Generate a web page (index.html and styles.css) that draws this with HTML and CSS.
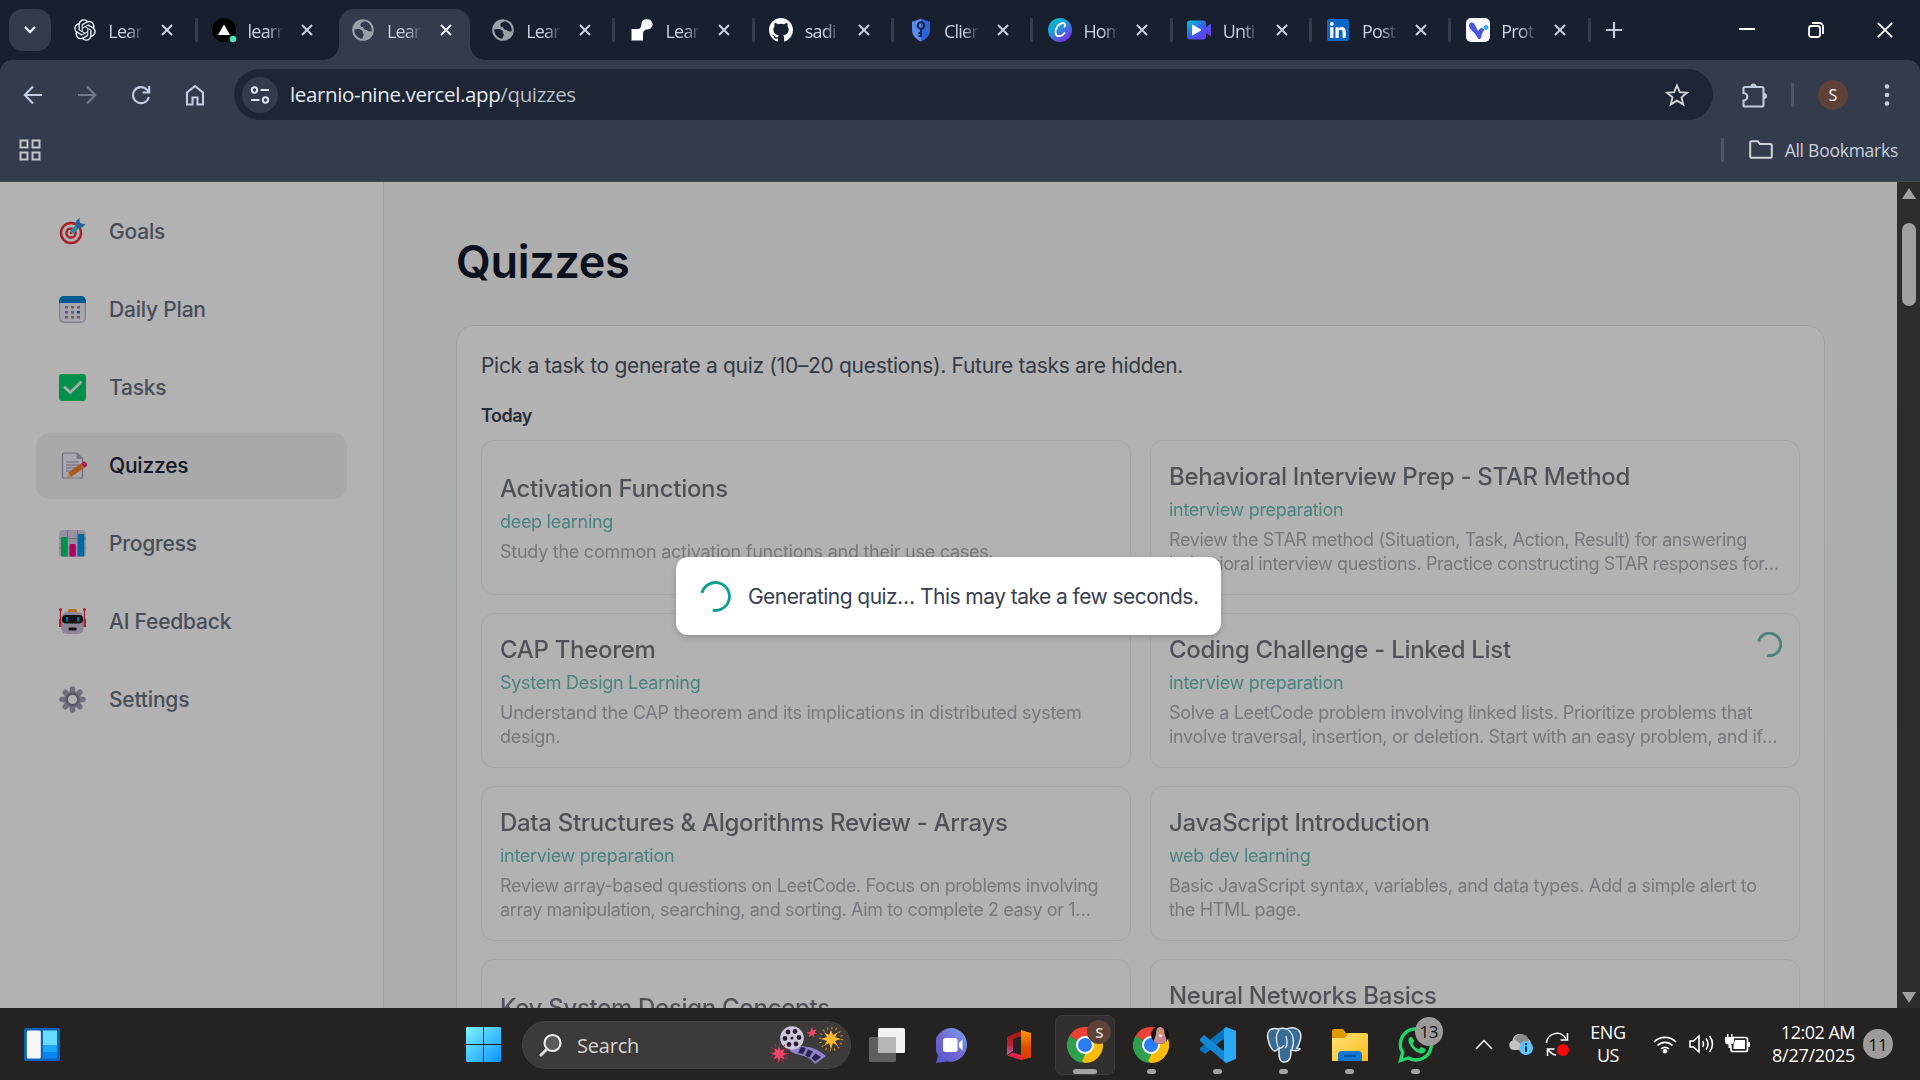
FILE: index.html
```html
<!DOCTYPE html>
<html lang="en">
<head>
<meta charset="utf-8">
<title>Learnio - Quizzes</title>
<link rel="stylesheet" href="styles.css">
</head>
<body>
<svg class="defs" aria-hidden="true">
  <defs>
    <linearGradient id="canva" x1="0" y1="0" x2=".7" y2="1"><stop offset="0" stop-color="#00c4cc"/><stop offset=".45" stop-color="#1b9fd8"/><stop offset="1" stop-color="#7d2ae8"/></linearGradient>
    <linearGradient id="film" x1="0" y1="0" x2="1" y2="1"><stop offset="0" stop-color="#00c8c8"/><stop offset=".5" stop-color="#3a5cf0"/><stop offset="1" stop-color="#8a2af0"/></linearGradient>
    <linearGradient id="win" gradientUnits="userSpaceOnUse" x1="0" y1="0" x2="35" y2="35"><stop offset="0" stop-color="#7df5ff"/><stop offset="1" stop-color="#0a93ff"/></linearGradient>
    <linearGradient id="teams" x1="1" y1="0" x2="0" y2="1"><stop offset="0" stop-color="#7ba6f0"/><stop offset=".5" stop-color="#7268d0"/><stop offset="1" stop-color="#5552c8"/></linearGradient>
    <linearGradient id="office" x1="0" y1="0" x2="0" y2="1"><stop offset="0" stop-color="#ff9a00"/><stop offset=".6" stop-color="#e04a00"/><stop offset="1" stop-color="#d93a00"/></linearGradient>
    <linearGradient id="officel" x1="0" y1="0" x2="0" y2="1"><stop offset="0" stop-color="#a81208"/><stop offset=".6" stop-color="#b8283c"/><stop offset="1" stop-color="#c05ab8"/></linearGradient>
    <linearGradient id="folder" x1="0" y1="0" x2="1" y2="1"><stop offset="0" stop-color="#ffe27a"/><stop offset="1" stop-color="#fbbc1a"/></linearGradient>
    <symbol id="close" viewBox="0 0 14 14"><path d="M2 2l10 10M12 2L2 12" stroke="currentColor" stroke-width="2" fill="none"/></symbol>
    <symbol id="globe" viewBox="0 0 22 22"><circle cx="11" cy="11" r="10.800" fill="#9aa0a8"/><path d="M13 2.300C11 2.800 8.500 3.800 8.300 6c0 1.800 1.500 2 2.700 2 .5 1.800 1.800 3 3.500 3 1 1.300 3 1.800 5.200 1.200C20.300 8 17.500 3.300 13 2.300zM2.300 10.500c2.200-.8 6-.7 7.700.8 1.200 1 1 2.200.5 3 1.500.2 1.700 1.500.8 2.800-.7 1-.6 1.800-.5 2.600C6 19.800 2 15.500 2.300 10.500z" fill="var(--hole)"/></symbol>
    <symbol id="chrome" viewBox="0 0 36 36"><path d="M18 18L2.400 9A18 18 0 0 1 33.600 9z" fill="#ea4335"/><path d="M18 18L33.600 9A18 18 0 0 1 18 36z" fill="#fbbc05"/><path d="M18 18v18A18 18 0 0 1 2.400 9z" fill="#2fa04e"/><path d="M18 9h15.600L35 13H20z" fill="#fbbc05"/><path d="M25.800 22.500L18 36l-3-2 5-10z" fill="#fbbc05"/><path d="M10.200 22.500L2.400 9l8 5z" fill="#2fa04e"/><circle cx="18" cy="18" r="9" fill="#fff"/><circle cx="18" cy="18" r="7" fill="#2a7cf0"/></symbol>
  </defs>
</svg>

<header class="browser">
  <div class="tabstrip">
    <button class="tab-search"><svg width="14" height="10" viewBox="0 0 14 10"><path d="M2 2l5 5 5-5" fill="none" stroke="#e6ebf5" stroke-width="2.400"/></svg></button>
    <div class="tabs">
      <div class="tab"><svg class="fav" viewBox="0 0 24 24"><path fill="#e8ecf2" transform="translate(1.200 1.200) scale(.9)" d="M22.282 9.821a5.985 5.985 0 0 0-.516-4.910 6.046 6.046 0 0 0-6.510-2.900A6.065 6.065 0 0 0 4.981 4.182a5.985 5.985 0 0 0-3.998 2.900 6.046 6.046 0 0 0 .743 7.097 5.980 5.980 0 0 0 .510 4.911 6.051 6.051 0 0 0 6.515 2.900A5.985 5.985 0 0 0 13.260 24a6.056 6.056 0 0 0 5.772-4.206 5.990 5.990 0 0 0 3.997-2.900 6.056 6.056 0 0 0-.747-7.073zM13.260 22.430a4.476 4.476 0 0 1-2.876-1.040l.141-.081 4.779-2.758a.795.795 0 0 0 .392-.681v-6.737l2.020 1.168a.071.071 0 0 1 .038.052v5.583a4.504 4.504 0 0 1-4.494 4.494zM3.600 18.304a4.470 4.470 0 0 1-.535-3.014l.142.085 4.783 2.759a.771.771 0 0 0 .780 0l5.843-3.369v2.332a.080.080 0 0 1-.033.062L9.740 19.950a4.500 4.500 0 0 1-6.140-1.646zM2.340 7.896a4.485 4.485 0 0 1 2.366-1.973V11.600a.766.766 0 0 0 .388.676l5.815 3.355-2.020 1.168a.076.076 0 0 1-.071 0l-4.830-2.786A4.504 4.504 0 0 1 2.340 7.872zm16.597 3.855l-5.833-3.387L15.119 7.200a.076.076 0 0 1 .071 0l4.830 2.791a4.494 4.494 0 0 1-.676 8.105v-5.678a.790.790 0 0 0-.407-.667zm2.010-3.023l-.141-.085-4.774-2.782a.776.776 0 0 0-.785 0L9.409 9.230V6.897a.066.066 0 0 1 .028-.061l4.830-2.787a4.500 4.500 0 0 1 6.680 4.660zm-12.640 4.135l-2.020-1.164a.080.080 0 0 1-.038-.057V6.075a4.500 4.500 0 0 1 7.375-3.453l-.142.080L8.704 5.460a.795.795 0 0 0-.393.681zm1.097-2.365l2.602-1.500 2.607 1.500v2.999l-2.597 1.500-2.607-1.500z"/></svg><span class="tab-title">Lear</span><svg class="x"><use href="#close"/></svg></div>
      <div class="tab nosep"><svg class="fav" viewBox="0 0 24 24"><circle cx="12" cy="12" r="12" fill="#000"/><path d="M12 6.500l6 10.500H6z" fill="#fff"/><circle cx="21" cy="21" r="3.200" fill="#50e3c2"/></svg><span class="tab-title">learn</span><svg class="x"><use href="#close"/></svg></div>
      <div class="tab active nosep"><svg class="fav globe" viewBox="0 0 22 22"><use href="#globe"/></svg><span class="tab-title">Lear</span><svg class="x"><use href="#close"/></svg></div>
      <div class="tab"><svg class="fav globe" viewBox="0 0 22 22"><use href="#globe"/></svg><span class="tab-title">Lear</span><svg class="x"><use href="#close"/></svg></div>
      <div class="tab"><svg class="fav" viewBox="0 0 24 24"><path d="M1.500 11H7c4 0 4-2 4.500-5.500S14 1 17.500 1.300a5 5 0 0 1 0 10.200C13.500 11.500 13 14 13 17v5.500H1.500z" fill="#fff"/></svg><span class="tab-title">Lear</span><svg class="x"><use href="#close"/></svg></div>
      <div class="tab"><svg class="fav" viewBox="0 0 16 16"><path fill="#fff" d="M8 0C3.580 0 0 3.580 0 8c0 3.540 2.290 6.530 5.470 7.590.4.070.55-.17.55-.38 0-.19-.010-.82-.010-1.490-2.010.37-2.530-.49-2.690-.94-.090-.23-.48-.94-.82-1.130-.28-.15-.68-.52-.010-.53.63-.010 1.080.58 1.230.82.72 1.210 1.870.87 2.330.66.070-.52.28-.87.51-1.070-1.780-.2-3.640-.89-3.640-3.950 0-.87.31-1.590.82-2.150-.080-.2-.36-1.020.080-2.120 0 0 .67-.21 2.200.82a7.600 7.600 0 0 1 4 0c1.530-1.040 2.200-.82 2.200-.82.44 1.100.16 1.920.080 2.120.51.56.82 1.270.82 2.150 0 3.070-1.870 3.750-3.650 3.950.29.25.54.73.54 1.480 0 1.070-.010 1.930-.010 2.200 0 .21.15.46.55.38A8 8 0 0 0 16 8c0-4.420-3.580-8-8-8z"/></svg><span class="tab-title">sadi</span><svg class="x"><use href="#close"/></svg></div>
      <div class="tab"><svg class="fav" viewBox="0 0 24 24"><path d="M12 .8l9 3V12c0 6-4.500 9.500-9 11.500z" fill="#2f63d6"/><path d="M12 .8L3 3.800V12c0 6 4.500 9.500 9 11.500z" fill="#5a8be6"/><circle cx="12" cy="7.500" r="3.300" fill="none" stroke="#10264f" stroke-width="2"/><path d="M12 11v8M12 15h-2.500M12 18h-2.500" stroke="#10264f" stroke-width="2"/></svg><span class="tab-title">Clien</span><svg class="x"><use href="#close"/></svg></div>
      <div class="tab"><svg class="fav" viewBox="0 0 24 24"><circle cx="12" cy="12" r="12" fill="url(#canva)"/><path d="M16.500 8.800c1-1.500.5-3.800-1.500-3.800-4 0-8 5.500-7.500 9.800.5 4.500 6 4.500 9 .2" fill="none" stroke="#fff" stroke-width="1.800" stroke-linecap="round"/></svg><span class="tab-title">Hom</span><svg class="x"><use href="#close"/></svg></div>
      <div class="tab"><svg class="fav" viewBox="0 0 24 24"><path d="M3 2.500h13a3 3 0 0 1 3 3V9l5-3.500v13L19 15v3.500a3 3 0 0 1-3 3H3a3 3 0 0 1-3-3v-13a3 3 0 0 1 3-3z" fill="url(#film)"/><path d="M5.500 7l8.500 5-8.500 5z" fill="#fff" stroke="#fff" stroke-linejoin="round"/></svg><span class="tab-title">Unti</span><svg class="x"><use href="#close"/></svg></div>
      <div class="tab"><svg class="fav" viewBox="0 0 24 24"><rect x="1" y="1" width="22" height="22" rx="2" fill="#0a66c2"/><path d="M4.200 9.300h3.200V20H4.200zM9.500 9.300h3v1.500c1.300-2.600 7.300-2.600 7.300 2.700V20h-3.200v-5.800c0-3.200-3.900-3-3.900 0V20H9.500z" fill="#fff"/><circle cx="5.800" cy="6" r="1.900" fill="#fff"/></svg><span class="tab-title">Post</span><svg class="x"><use href="#close"/></svg></div>
      <div class="tab"><svg class="fav" viewBox="0 0 24 24"><rect width="24" height="24" rx="5" fill="#f7f8ff"/><path d="M3 7.500C3 4 7.500 3.500 9 7l3 6 3.500-3.500 2.800 2.200c-2 2-2.300 5-3.300 8-.6 1.800-3 1.800-3.600 0C9.500 14 3 12 3 7.500z" fill="#4a55dc"/><circle cx="20" cy="9.500" r="2.400" fill="#35aef0"/></svg><span class="tab-title">Prot</span><svg class="x"><use href="#close"/></svg></div>
    </div>
    <svg class="new-tab" width="16" height="16" viewBox="0 0 16 16"><path d="M8 0v16M0 8h16" stroke="#c3cde0" stroke-width="2.200"/></svg>
    <div class="window-controls">
      <svg width="16" height="16" viewBox="0 0 16 16"><path d="M0 7h16" stroke="#fff" stroke-width="2"/></svg>
      <svg width="16" height="16" viewBox="0 0 16 16"><rect x="1" y="4" width="11" height="11" rx="2.500" fill="none" stroke="#fff" stroke-width="1.800"/><path d="M4 1h7.500A3.500 3.500 0 0 1 15 4.500V12" fill="none" stroke="#fff" stroke-width="1.800"/></svg>
      <svg width="16" height="16" viewBox="0 0 16 16"><path d="M.8.8l14.400 14.400M15.200.8L.8 15.200" stroke="#fff" stroke-width="1.700"/></svg>
    </div>
  </div>
  <div class="toolbar">
    <div class="nav-buttons">
      <svg width="20" height="20" viewBox="0 0 20 20"><path d="M10 1.500L1.800 10l8.200 8.500M2 10h17" fill="none" stroke="#c3cde6" stroke-width="2.100"/></svg>
      <svg width="20" height="20" viewBox="0 0 20 20"><path d="M10 1.500l8.200 8.500-8.200 8.500M18 10H1" fill="none" stroke="#737b8b" stroke-width="2.100"/></svg>
      <svg width="20" height="20" viewBox="0 0 20 20"><path d="M17.800 12a8 8 0 1 1-1.800-7.200l2 2.200M18.200 1v6.500h-6.500" fill="none" stroke="#c3cde6" stroke-width="2.100"/></svg>
      <svg width="20" height="22" viewBox="0 0 20 22"><path d="M2 8.500L10 2l8 6.500V20.500h-5.500v-7h-5v7H2z" fill="none" stroke="#c3cde6" stroke-width="2.100"/></svg>
    </div>
    <div class="omnibox">
      <span class="site-info"><svg width="20" height="18" viewBox="0 0 20 18"><g fill="none" stroke="#dfe5f0" stroke-width="2"><circle cx="4.500" cy="4" r="2.700"/><path d="M10.500 4H19M1 14h8.500"/><circle cx="15.500" cy="14" r="2.700"/></g></svg></span>
      <span class="url">learnio-nine.vercel.app<span class="path">/quizzes</span></span>
      <svg class="star" width="24" height="24" viewBox="0 0 24 24"><path d="M12 2.500l2.800 6.600 7.200.6-5.500 4.700 1.700 7-6.200-3.800-6.200 3.800 1.700-7L2 9.700l7.200-.6z" fill="none" stroke="#d0d2d6" stroke-width="1.900"/></svg>
    </div>
    <div class="extras">
      <svg width="26" height="26" viewBox="0 0 26 26"><path d="M4 5h17a1.500 1.500 0 0 1 1.500 1.500V23A1.500 1.500 0 0 1 21 24.500H4A1.500 1.500 0 0 1 2.500 23v-4.500c5 0 5-7.500 0-7.500V6.500A1.500 1.500 0 0 1 4 5z" fill="none" stroke="#bfc9e2" stroke-width="2.100"/><path d="M9.500 4.500a3 3 0 0 1 6 0zM23 11a3 3 0 0 1 0 6z" fill="#bfc9e2"/></svg>
      <span class="divider"></span>
      <span class="avatar">S</span>
      <svg width="6" height="24" viewBox="0 0 6 24"><g fill="#c3cde6"><circle cx="3" cy="3.500" r="2.300"/><circle cx="3" cy="12" r="2.300"/><circle cx="3" cy="20.500" r="2.300"/></g></svg>
    </div>
  </div>
  <div class="bookmarks">
    <svg width="22" height="22" viewBox="0 0 22 22"><g fill="none" stroke="#c4c6cb" stroke-width="2"><rect x="1.500" y="1.500" width="7" height="7"/><rect x="13.500" y="1.500" width="7" height="7"/><rect x="1.500" y="13.500" width="7" height="7"/><rect x="13.500" y="13.500" width="7" height="7"/></g></svg>
    <div class="all-bookmarks">
      <span class="divider"></span>
      <svg width="24" height="19" viewBox="0 0 24 19"><path d="M1.200 2.500a1.300 1.300 0 0 1 1.300-1.300h6.300L11 4h10.500a1.300 1.300 0 0 1 1.300 1.300v11.200a1.300 1.300 0 0 1-1.300 1.300h-19a1.300 1.300 0 0 1-1.300-1.300z" fill="none" stroke="#d2d4d8" stroke-width="2"/></svg>
      <span>All Bookmarks</span>
    </div>
  </div>
</header>

<div class="viewport">
  <div class="page">
    <nav class="sidebar">
      <a class="nav-item"><svg viewBox="0 0 27 27"><circle cx="12" cy="15" r="10" fill="#fff" stroke="#f0303c" stroke-width="2.500"/><circle cx="12" cy="15" r="4.600" fill="#fff" stroke="#f0303c" stroke-width="2.500"/><circle cx="12" cy="15" r="1.300" fill="#f0303c"/><path d="M12.500 14.500L19 8" stroke="#3cc4e6" stroke-width="4.500"/><path d="M17 3l3.500-3L21 5l5.500 1.500-3.500 3-5 .5-1.500-3z" fill="#3a8fe6"/></svg>Goals</a>
      <a class="nav-item"><svg viewBox="0 0 27 27"><rect x=".7" y=".7" width="25.600" height="25.600" rx="4.500" fill="#f2eef8" stroke="#b9b1c6" stroke-width="1.200"/><path d="M0 7V5a5 5 0 0 1 5-5h17a5 5 0 0 1 5 5v2z" fill="#0083ce"/><g fill="#8b8496"><path d="M6 10h3v2.500H6zM12 10h3v2.500h-3zM18 10h3v2.500h-3zM6 15h3v2.500H6zM12 15h3v2.500h-3zM6 20h3v2.500H6zM12 20h3v2.500h-3zM18 20h3v2.500h-3z"/></g><path d="M18 15h3v2.500h-3z" fill="#0083ce"/></svg>Daily Plan</a>
      <a class="nav-item"><svg viewBox="0 0 27 27"><rect width="27" height="27" rx="3" fill="#00d26a"/><path d="M6 13.500l5.200 5L21.500 8.500" fill="none" stroke="#f4f4f4" stroke-width="3" stroke-linecap="round" stroke-linejoin="round"/></svg>Tasks</a>
      <a class="nav-item current"><svg viewBox="0 0 27 27"><path d="M5 1h13l5.500 5.500V26H3.500V2.500A1.500 1.500 0 0 1 5 1z" fill="#f3eef8" stroke="#a49ab3" stroke-width="1.200"/><path d="M17.500 1v6h6z" fill="#b4acbc"/><path d="M7 10h13M7 13h13M7 16h9M7 19h5" stroke="#998ea4" stroke-width="1"/><path d="M9 21L21.500 11.500l3.500 4.500-13 9-3.500.5z" fill="#f5822a"/><path d="M9 20.500l3.500 4.500-4 .8z" fill="#fdd48a"/><path d="M22 12l2-2.200c2-1 5 2 4 4L25.500 16z" fill="#f8327a"/></svg>Quizzes</a>
      <a class="nav-item"><svg viewBox="0 0 27 27"><rect width="27" height="27" rx="4" fill="#d9cfe6"/><path d="M0 8.500h27M0 18h27M8.500 0v27M18.500 0v27" stroke="#a89eb6" stroke-width="1"/><rect x="2" y="7" width="6.300" height="19.500" rx="1" fill="#00d26a"/><rect x="10.500" y="14" width="6.300" height="12.500" rx="1" fill="#f7078c"/><rect x="19" y="4" width="6.300" height="22.500" rx="1" fill="#0098e8"/></svg>Progress</a>
      <a class="nav-item"><svg viewBox="0 0 27 27"><path d="M1.500 1v18M25.500 1v18" stroke="#f0303c" stroke-width="1.300"/><circle cx="1.500" cy="1.500" r="1.500" fill="#f0303c"/><circle cx="25.500" cy="1.500" r="1.500" fill="#f0303c"/><path d="M0 11h3v8H0zM24 11h3v8h-3z" fill="#f0303c"/><rect x="9" y="1" width="9" height="5" rx="1.500" fill="#f9a825"/><rect x="2.200" y="4" width="22.600" height="22" rx="6" fill="#cabfd8"/><rect x="3" y="7" width="21" height="8.500" rx="4" fill="#1c1c1c"/><path d="M7 9h2.300v4.500H7zM18 9h2.300v4.500H18z" fill="#00a6ed"/><rect x="9.500" y="19.500" width="8" height="3" rx="1" fill="#1c1c1c"/></svg>AI Feedback</a>
      <a class="nav-item"><svg viewBox="0 0 27 27"><g stroke="#a59db3" stroke-width="5.500" stroke-linecap="round"><path d="M13.500 3v21M3 13.500h21M6.200 6.200l14.600 14.600M20.800 6.200L6.200 20.800"/></g><circle cx="13.500" cy="13.500" r="8.500" fill="#a59db3"/><circle cx="13.500" cy="13.500" r="5.800" fill="#fff" stroke="#857b92" stroke-width="2.400"/></svg>Settings</a>
    </nav>
    <main class="main">
      <h1>Quizzes</h1>
      <section class="panel">
        <p class="hint">Pick a task to generate a quiz (10–20 questions). Future tasks are hidden.</p>
        <h2>Today</h2>
        <div class="cards">
          <article class="card"><h3>Activation Functions</h3><p class="topic">deep learning</p><p class="desc">Study the common activation functions and their use cases.</p></article>
          <article class="card"><h3>Behavioral Interview Prep - STAR Method</h3><p class="topic">interview preparation</p><p class="desc tight">Review the STAR method (Situation, Task, Action, Result) for answering<br>behavioral interview questions. Practice constructing STAR responses for…</p></article>
          <article class="card"><h3>CAP Theorem</h3><p class="topic">System Design Learning</p><p class="desc">Understand the CAP theorem and its implications in distributed system<br>design.</p></article>
          <article class="card"><h3>Coding Challenge - Linked List</h3><p class="topic">interview preparation</p><p class="desc snug">Solve a LeetCode problem involving linked lists. Prioritize problems that<br>involve traversal, insertion, or deletion. Start with an easy problem, and if…</p><svg class="card-spinner" viewBox="0 0 30 30"><path d="M1.900 11.600A13.500 13.500 0 1 1 12.300 28.200" fill="none" stroke="#0d9488" stroke-width="3.400"/></svg></article>
          <article class="card"><h3>Data Structures &amp; Algorithms Review - Arrays</h3><p class="topic">interview preparation</p><p class="desc tight">Review array-based questions on LeetCode. Focus on problems involving<br>array manipulation, searching, and sorting. Aim to complete 2 easy or 1…</p></article>
          <article class="card"><h3>JavaScript Introduction</h3><p class="topic">web dev learning</p><p class="desc snug">Basic JavaScript syntax, variables, and data types. Add a simple alert to<br>the HTML page.</p></article>
          <article class="card"><h3>Key System Design Concepts</h3><p class="topic">System Design Learning</p><p class="desc">Learn the key concepts.</p></article>
          <article class="card"><h3>Neural Networks Basics</h3><p class="topic">deep learning</p><p class="desc">Understand the basics of neural networks.<br>Layers and weights.</p></article>
        </div>
      </section>
    </main>
    <div class="overlay">
      <div class="dialog">
        <svg width="31" height="31" viewBox="0 0 30 30"><path d="M1.900 11.600A13.500 13.500 0 1 1 12.300 28.200" fill="none" stroke="#0d9f90" stroke-width="2.800"/></svg>
        <span>Generating quiz… This may take a few seconds.</span>
      </div>
    </div>
  </div>
  <div class="scrollbar">
    <svg width="14" height="11" viewBox="0 0 14 11"><path d="M7 0l7 11H0z" fill="#a0a0a0"/></svg>
    <span class="thumb"></span>
    <svg class="down" width="14" height="11" viewBox="0 0 14 11"><path d="M7 11l7-11H0z" fill="#a0a0a0"/></svg>
  </div>
</div>

<footer class="taskbar">
  <svg class="widgets" width="36" height="33" viewBox="0 0 36 33"><rect width="36" height="33" rx="2" fill="#0d62b8"/><rect x="2.800" y="2.500" width="14" height="28" rx="1.500" fill="#f6f6f6"/><rect x="19" y="2.500" width="14" height="15" fill="#66dcff"/><rect x="19" y="17.500" width="14" height="6.500" fill="#1ba6fb"/><rect x="19" y="24" width="14" height="6.500" fill="#0a84f0"/></svg>
  <div class="task-center">
    <svg width="35" height="35" viewBox="0 0 35 35"><path d="M1 0h16v17H0V1zM18 0h16l1 1v16H18zM0 18h17v17H1l-1-1zM18 18h17v16l-1 1H18z" fill="url(#win)"/></svg>
    <div class="search">
      <svg width="24" height="24" viewBox="0 0 24 24"><circle cx="13.500" cy="10" r="8" fill="#5a5a59" stroke="#eee" stroke-width="2.200"/><path d="M8 16l-6 6" stroke="#ddd" stroke-width="3" stroke-linecap="round"/></svg>
      <span>Search</span>
      <svg class="film-art" width="76" height="38" viewBox="0 0 76 38"><path d="M25 18c8 5 16-2 33 12l-11 8c-8-11-17-7-25-13z" fill="#8f7fce"/><path d="M33 21l5 1-3 6-5-1zM40 23.500l5 2-4 6-4-2zM47.500 27.500l5.500 3.500-6 4.500-3.500-3.500z" fill="#2c2348"/><circle cx="24" cy="12" r="11.800" fill="#d0c8da"/><g fill="#2a2035"><circle cx="20" cy="6" r="2.400"/><circle cx="27" cy="5.500" r="2.400"/><circle cx="31" cy="11.500" r="2.400"/><circle cx="28" cy="18" r="2.400"/><circle cx="21" cy="18.500" r="2.400"/><circle cx="17" cy="12.500" r="2.400"/><circle cx="24" cy="12" r="1.500"/></g><circle cx="63" cy="13" r="11" fill="none" stroke="#c98a24" stroke-width="2.500" stroke-dasharray="1.200 3.120"/><path d="M63 4l2 5 5-3-3 5 6 2-6 2 3 5-5-3-2 6-2-6-5 3 3-5-6-2 6-2-3-5 5 3z" fill="#ffb830"/><path d="M44 1l1.200 3.500L49 3l-2.500 3 3 1.500-3.500.5.500 4-2.500-3-3 2.500.5-3.500-3-1.500 3.500-.5z" fill="#f04468"/><circle cx="11" cy="27" r="8.500" fill="none" stroke="#b02440" stroke-width="3" stroke-dasharray="1 3.450"/><path d="M11 20l1.500 4.500 4.500-2-2 4 4.500 1.500-4.500 1.500 1.500 4-4-2-1.500 4.500-1.500-4.500-4 2 2-4L3 27.500 7.500 26l-2-4 4 2z" fill="#f04468"/></svg>
    </div>
    <div class="apps">
      <span class="app"><svg width="36" height="34" viewBox="0 0 36 34"><rect y="9" width="27" height="25" rx="1.500" fill="#5e5e5e"/><rect x="9" width="27" height="25" rx="1.500" fill="#f2f2f2"/><path d="M9 9h18v16H9z" fill="#b5b5b5"/></svg></span>
      <span class="app"><svg width="34" height="35" viewBox="0 0 34 35"><path d="M17 0a17 17 0 1 1-6 33.500L0 35l2-8A17 17 0 0 1 17 0z" fill="url(#teams)"/><rect x="7" y="10" width="14.500" height="14" rx="2.500" fill="#fff"/><path d="M23 15l3.500-3.500v11L23 19z" fill="#fff"/></svg></span>
      <span class="app"><svg width="26" height="31" viewBox="0 0 26 31"><path d="M1 7l14-6v5L7 9v12l-6 4z" fill="url(#officel)"/><path d="M15 0l10 3v24.500L15 30z" fill="url(#office)"/><path d="M1 25.500l6-3 8 2.500v5z" fill="#e4204e"/></svg></span>
      <span class="app focused"><svg width="36" height="36"><use href="#chrome"/></svg><i class="profile">S</i><i class="run wide"></i></span>
      <span class="app"><svg width="36" height="36"><use href="#chrome"/></svg><svg class="portrait" width="18" height="18" viewBox="0 0 18 18"><clipPath id="pc"><circle cx="9" cy="9" r="9"/></clipPath><g clip-path="url(#pc)"><rect width="18" height="18" fill="#101018"/><path d="M9 1c3 0 4.500 2.500 4.500 6l3 11H2L5 8c0-4 1-7 4-7z" fill="#c88a90"/><ellipse cx="9.500" cy="6.500" rx="2.800" ry="3.800" fill="#c8936e"/><path d="M7.500 8.500h4l-1 2.500h-2z" fill="#f0e6e2"/></g></svg><i class="run"></i></span>
      <span class="app"><svg width="36" height="36" viewBox="0 0 36 36"><path d="M26 0v10L5 27l-5-4v-2z" fill="#0874bd"/><path d="M0 12l4-4 22 18v10L0 14z" fill="#1487d4"/><path d="M26 0l10 4v28l-10 4-2-2V2z" fill="#2aa9f4"/></svg><i class="run"></i></span>
      <span class="app"><svg width="36" height="36" viewBox="0 0 36 36"><path d="M12 2C5 0 0 4 2 12c1 6 4 12 7 12 2 0 3-2 4-3 0 5-1 14 5 14 7 0 7-7 7-12 4 1 8 1 9-1l-3-1c3-5 5-12 3-16-3-5-9-5-13-3-3-1-6-1-9 0z" fill="#396c94" stroke="#e4ebf0" stroke-width="1.500"/><path d="M13 3c-4 5-3 11-1 17M22 3c5 3 7 11 4 19M18 18c-2 4-5 3-6 4M19 21c3-2 2-9 1-12" fill="none" stroke="#e4ebf0" stroke-width="1.300"/></svg><i class="run"></i></span>
      <span class="app"><svg width="36" height="33" viewBox="0 0 36 33"><path d="M0 2a2 2 0 0 1 2-2h9l3 4h8v8H0z" fill="#dc9a00"/><path d="M0 9h13l4-5h17a2 2 0 0 1 2 2v26H0z" fill="url(#folder)"/><path d="M6 32v-6a4 4 0 0 1 4-4h16a4 4 0 0 1 4 4v6z" fill="#0f78d4"/><path d="M12 27h12" stroke="#0a4f9e" stroke-width="2"/></svg><i class="run"></i></span>
      <span class="app"><svg width="36" height="36" viewBox="0 0 36 36"><path d="M2.500 33.500l2.200-8A15.500 15.500 0 1 1 10.500 31z" fill="none" stroke="#25d366" stroke-width="3.400"/><path d="M12.500 10c-3 1.500-2.500 5 .5 9.500 4 5.500 9 8 12.500 6.500 2-1 2.500-3 2-4l-4-2c-1-.3-2 2.500-3 2.200-2.500-1-5-3.500-5.800-5.500 0-1 2-2 1.500-3l-2-3.500z" fill="#25d366"/></svg><i class="count">13</i><i class="run"></i></span>
    </div>
  </div>
  <div class="tray">
    <svg class="chev" width="18" height="11" viewBox="0 0 18 11"><path d="M1 10l8-8.500 8 8.500" fill="none" stroke="#fff" stroke-width="1.500"/></svg>
    <svg class="cloud" width="25" height="22" viewBox="0 0 25 22"><path d="M5 17a5 5 0 0 1-.5-9.500C6 0 14-1 17 5c4 0 6 3 6 6s-2 6-5 6z" fill="#c4c4c4"/><path d="M6 6c3-8 15-6 15 3l-8 2z" fill="#8c8c8c"/><circle cx="18" cy="15" r="7" fill="#5cc3f7"/><path d="M18 13.500V19M18 10v2" stroke="#07344e" stroke-width="2"/></svg>
    <svg class="sync" width="25" height="25" viewBox="0 0 25 25"><path d="M1.500 11A10.500 10.500 0 0 1 21 6.500M22.500 1v7h-7M2.500 24v-7h7M3 17.500c2 3 4 5 8 5.500" fill="none" stroke="#fff" stroke-width="1.500"/><circle cx="18" cy="18" r="6" fill="#fb0505"/></svg>
    <span class="lang">ENG<br>US</span>
    <svg class="wifi" width="24" height="20" viewBox="0 0 24 20"><g fill="none" stroke="#fff" stroke-width="1.700"><path d="M1 8a15.500 15.500 0 0 1 22 0M4.500 11.500a10.500 10.500 0 0 1 15 0M8 15a5.600 5.600 0 0 1 8 0"/></g><circle cx="12" cy="17.300" r="2.200" fill="#fff"/></svg>
    <svg class="vol" width="25" height="20" viewBox="0 0 25 20"><path d="M1 7h3.500L10 2v16l-5.500-5H1zM13.500 7q2 3 0 6M17 4.500q4 5.500 0 11M20.500 2q6 8 0 16" fill="none" stroke="#fff" stroke-width="1.600"/></svg>
    <svg class="bat" width="25" height="20" viewBox="0 0 25 20"><path d="M7 3.500h13.500a2 2 0 0 1 2 2v10a2 2 0 0 1-2 2H8a2 2 0 0 1-2-2v-4" fill="none" stroke="#fff" stroke-width="1.700"/><path d="M10 6h10v9H8.500v-4zM23 8h2v5h-2zM0 3h9v4a3.500 3.500 0 0 1-3 3.500V14H3.500v-3.500A3.500 3.500 0 0 1 0 7zM2 0h1.500v3H2zM6 0h1.500v3H6z" fill="#fff"/></svg>
    <span class="clock"><span class="time">12:02 AM</span><br>8/27/2025</span>
    <span class="notif">11</span>
  </div>
</footer>
</body>
</html>
```
FILE: styles.css
```css
* { box-sizing: border-box; }
body {
  margin: 0;
  width: 1920px;
  height: 1080px;
  overflow: hidden;
  display: flex;
  flex-direction: column;
  background: #182030;
  font-family: Inter, sans-serif;
}
h1, h2, h3, p { margin: 0; }
svg { display: block; flex: none; }
i { font-style: normal; }
.defs { position: absolute; width: 0; height: 0; }

/* browser window */
.browser {
  height: 182px;
  flex: none;
  font-family: "Open Sans", "Noto Sans", sans-serif;
  color: #c9d0de;
}
.tabstrip {
  height: 60px;
  display: flex;
  align-items: center;
  padding-left: 9px;
}
.tab-search {
  width: 42px;
  height: 42px;
  margin-right: 5.300px;
  padding: 0;
  border: 0;
  border-radius: 14px;
  background: #333b4c;
  display: grid;
  place-items: center;
}
.tabs { display: flex; height: 60px; flex: none; }
.tab {
  --hole: #182030;
  position: relative;
  width: 139.300px;
  height: 60px;
  padding: 0 0 0 16.500px;
  display: flex;
  align-items: center;
}
.fav { width: 24px; height: 24px; overflow: visible; }
.fav.globe { width: 22px; height: 22px; margin: 0 1px; }
.tab-title {
  width: 35px;
  margin-left: 11.500px;
  overflow: hidden;
  white-space: nowrap;
  font-size: 18px;
  line-height: 24px;
  letter-spacing: -0.8px;
  padding-top: 2px;
  -webkit-mask-image: linear-gradient(90deg, #000 55%, transparent 102%);
  mask-image: linear-gradient(90deg, #000 55%, transparent 102%);
}
.x { width: 14px; height: 14px; margin-left: 17px; color: #c9d0de; }
.tab:not(.nosep)::after {
  content: "";
  position: absolute;
  right: -2px;
  top: 18px;
  width: 3px;
  height: 24px;
  border-radius: 1px;
  background: #333b4c;
}
.tab.active { --hole: #333b4c; }
.tab.active .x { color: #eef1f7; }
.tab.active > * { z-index: 1; }
.tab.active::before {
  content: "";
  position: absolute;
  left: 4px;
  right: 4px;
  top: 9px;
  bottom: 0;
  border-radius: 15px 15px 0 0;
  background: #333b4c;
}
.tab.active::after {
  content: "";
  position: absolute;
  left: -11px;
  right: -11px;
  bottom: 0;
  height: 15px;
  width: auto;
  background:
    radial-gradient(circle at 0 0, transparent 14.500px, #333b4c 15px) left / 15px 15px no-repeat,
    radial-gradient(circle at 100% 0, transparent 14.500px, #333b4c 15px) right / 15px 15px no-repeat;
}
.new-tab { margin-left: 17px; }
.window-controls { display: flex; gap: 53px; margin-left: auto; padding-right: 27px; }

.toolbar {
  height: 70px;
  display: flex;
  align-items: center;
  background: #333b4c;
  border-radius: 12px 12px 0 0;
}
.nav-buttons { width: 234px; display: flex; align-items: center; gap: 34px; padding-left: 23px; }
.omnibox {
  width: 1479px;
  height: 51px;
  margin-bottom: 1px;
  padding: 0 24px 0 8px;
  border-radius: 26px;
  background: #1e2636;
  display: flex;
  align-items: center;
}
.site-info {
  width: 36px;
  height: 36px;
  border-radius: 50%;
  background: #333b4c;
  display: grid;
  place-items: center;
}
.url { margin-left: 12px; padding-bottom: 1px; font-size: 20.500px; letter-spacing: -0.37px; color: #e6eaf2; }
.url .path { color: #b9bfca; }
.star { margin-left: auto; }
.extras { display: flex; align-items: center; padding-left: 28px; }
.divider { width: 3px; height: 24px; border-radius: 1px; background: #4d5566; }
.extras .divider { margin-left: 24px; }
.avatar {
  width: 30px;
  height: 30px;
  margin: 0 36px 0 24px;
  border-radius: 50%;
  background: #5f4137;
  color: #fff;
  font-size: 16px;
  display: grid;
  place-items: center;
}
.bookmarks {
  height: 52px;
  padding: 0 22px 12px 19px;
  display: flex;
  align-items: center;
  justify-content: space-between;
  background: #333b4c;
  border-bottom: 1px solid #47484c;
}
.all-bookmarks { display: flex; align-items: center; font-size: 17.500px; letter-spacing: -0.25px; }
.all-bookmarks svg { margin: 0 12px 0 25px; }

/* app page */
.viewport { height: 826px; flex: none; display: flex; overflow: hidden; }
.page { position: relative; width: 1897px; display: flex; overflow: hidden; background: #f9f9f9; }
.sidebar {
  width: 384px;
  padding: 17px 36px 0;
  display: flex;
  flex-direction: column;
  gap: 12.500px;
  background: #fff;
  border-right: 1px solid #e5e7eb;
}
.nav-item {
  height: 65.500px;
  flex: none;
  padding-left: 23px;
  border-radius: 14px;
  display: flex;
  align-items: center;
  gap: 23px;
  color: #66707f;
  font-size: 21px;
  font-weight: 500;
  letter-spacing: -0.2px;
}
.nav-item svg { width: 27px; height: 27px; overflow: visible; }
.nav-item.current { background: #f2f2f4; color: #1f2937; }
.main {
  flex: 1;
  padding: 47px 72px 0;
  background: linear-gradient(180deg, #f9f9f9 180px, #f4f9f7 330px, #f4f8f7 440px, #f9f9f9 600px);
}
h1 {
  height: 66px;
  line-height: 66px;
  margin-bottom: 30px;
  font-size: 45px;
  font-weight: 600;
  letter-spacing: -0.3px;
  color: #0f172a;
}
.panel {
  height: 1000px;
  padding: 23px 24px;
  border: 1px solid #e5e7eb;
  border-radius: 18px;
  background: #fff;
}
.hint { font-size: 21px; line-height: 33px; color: #4b5563; letter-spacing: -0.31px; white-space: nowrap; }
h2 { margin: 22px 0 12px; font-size: 18px; line-height: 24px; font-weight: 600; color: #374151; letter-spacing: -0.5px; }
.cards { display: grid; grid-template-columns: 650px 650px; column-gap: 19px; row-gap: 18px; grid-auto-rows: 155px; }
.card {
  position: relative;
  padding: 0 18px;
  border: 1px solid #e2e4e8;
  border-radius: 13px;
  display: flex;
  flex-direction: column;
  justify-content: center;
  opacity: .62;
  white-space: nowrap;
}
.card h3 { font-size: 24px; line-height: 36px; font-weight: 500; color: #1a2230; letter-spacing: -0.3px; }
.topic { margin-top: 3px; font-size: 18px; line-height: 24px; color: #0d9488; letter-spacing: -0.3px; }
.desc { margin-top: 6px; font-size: 18px; line-height: 24px; color: #737a87; letter-spacing: -0.26px; }
.desc.snug { letter-spacing: -0.33px; }
.desc.tight { letter-spacing: -0.39px; }
.card-spinner { position: absolute; right: 17px; top: 18px; width: 25px; height: 25px; }
.overlay {
  position: absolute;
  inset: 0;
  display: grid;
  place-items: center;
  padding-top: 2px;
  background: rgba(0, 0, 0, .3);
}
.dialog {
  height: 78px;
  width: 545px;
  padding-left: 24px;
  border-radius: 12px;
  display: flex;
  align-items: center;
  gap: 17px;
  background: #fff;
  box-shadow: 0 2px 6px rgba(0, 0, 0, .2);
  color: #374151;
  font-size: 21px;
  letter-spacing: -0.55px;
  white-space: nowrap;
}
.scrollbar {
  width: 23px;
  padding: 6px 0 5px;
  display: flex;
  flex-direction: column;
  align-items: center;
  background: #2c2c2c;
}
.thumb { width: 14px; height: 83px; margin-top: 24px; border-radius: 7px; background: #9f9f9f; }
.down { margin-top: auto; }

/* taskbar */
.taskbar {
  position: relative;
  height: 72px;
  flex: none;
  display: flex;
  align-items: center;
  background: #242322;
  color: #fff;
  font-family: "Open Sans", "Noto Sans", sans-serif;
}
.widgets { margin-left: 24px; }
.task-center { display: flex; align-items: center; margin-left: 406px; }
.search {
  width: 329px;
  height: 48px;
  margin: 2px 3px 0 21px;
  padding: 0 6px 0 16px;
  border-radius: 24px;
  border: 1px solid #454443;
  background: #3c3b3a;
  display: flex;
  align-items: center;
  color: #d6d6d5;
  font-size: 20px;
  letter-spacing: -0.2px;
}
.search span { margin-left: 14px; }
.film-art { margin-left: auto; }
.apps { display: flex; }
.app { position: relative; width: 66.100px; height: 72px; display: grid; place-items: center; }
.app.focused::before {
  content: "";
  position: absolute;
  inset: 7px 3px 5px;
  border-radius: 7px;
  border: 1px solid #3c3b3a;
  background: #32302f;
}
.app > svg { position: relative; top: 1px; }
.app .run {
  position: absolute;
  bottom: 6px;
  left: 50%;
  width: 9px;
  height: 5px;
  margin-left: -4.500px;
  border-radius: 3px;
  background: #a3a2a1;
}
.app .run.wide { width: 24px; margin-left: -12px; }
.profile, .count {
  position: absolute;
  display: grid;
  place-items: center;
  border-radius: 50%;
}
.profile { left: 35px; top: 12px; width: 24px; height: 24px; background: #5f4137; color: #ddd; font-size: 15px; font-weight: 600; }
.count { left: 32px; top: 9px; width: 28px; height: 29px; background: #9c9b9a; color: #111; font-size: 17px; letter-spacing: -0.5px; }
.app > .portrait { position: absolute; left: 33px; top: 18px; }
.tray { display: flex; align-items: center; margin-left: auto; padding-right: 27px; }
.cloud { margin-left: 15px; }
.sync { margin-left: 12px; }
.lang { width: 44px; margin-left: 16px; text-align: center; font-size: 18px; line-height: 23px; letter-spacing: -0.4px; }
.wifi { margin-left: 23px; }
.vol { margin-left: 12px; }
.bat { margin-left: 11px; }
.clock { width: 89px; margin-left: 16px; text-align: right; font-size: 18px; line-height: 23px; letter-spacing: -0.25px; white-space: nowrap; }
.clock .time { letter-spacing: -0.5px; }
.notif {
  width: 30px;
  height: 30px;
  margin-left: 8px;
  border-radius: 50%;
  background: #9d9c9b;
  color: #111;
  font-size: 17px;
  display: grid;
  place-items: center;
}
```
